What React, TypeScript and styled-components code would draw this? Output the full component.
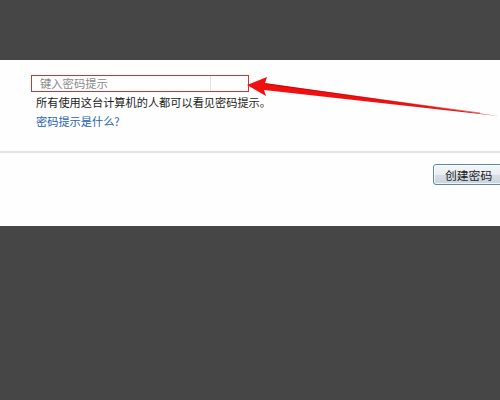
import React from 'react';
import styled, { createGlobalStyle } from 'styled-components';

const Global = createGlobalStyle`
  html, body {
    margin: 0;
    padding: 0;
    background: #464646;
    font-family: "Noto Sans CJK SC", "Noto Sans", sans-serif;
    overflow: hidden;
  }
`;

const Page = styled.div`
  position: relative;
  width: 500px;
  height: 400px;
  display: flex;
  flex-direction: column;
  overflow: hidden;
`;

const TopBand = styled.div`
  height: 60px;
  background: #464646;
`;

const Panel = styled.div`
  background: #fefefe;
  height: 166px;
  display: flex;
  flex-direction: column;
`;

const Form = styled.div`
  padding: 15px 0 0 31px;
  height: 76px;
  display: flex;
  flex-direction: column;
`;

const HintBox = styled.div`
  width: 216px;
  height: 15px;
  border: 1px solid #c9373c;
  display: flex;
  align-items: center;
`;

const HintText = styled.div`
  flex: 0 0 179px;
  height: 100%;
  border-right: 1px solid #e2e2e2;
  padding-left: 8px;
  box-sizing: border-box;
  font-size: 11.3px;
  line-height: 15px;
  color: #8a8a8a;
`;

const Line = styled.div<{ $link?: boolean }>`
  margin: ${p => (p.$link ? '4px 0 0 5px' : '3px 0 0 5px')};
  font-size: 11.2px;
  line-height: 15px;
  color: ${p => (p.$link ? '#2364b0' : '#1b1b1b')};
`;

const Divider = styled.div`
  height: 2px;
  background: #e4e4e4;
`;

const Actions = styled.div`
  display: flex;
  justify-content: flex-end;
  padding-top: 11px;
  margin-right: -25px;
`;

const Button = styled.div`
  width: 79px;
  height: 19px;
  border: 1px solid #5b87ab;
  border-radius: 3px;
  background: linear-gradient(#f5f7f9 0%, #e9edf1 50%, #d8dee4 51%, #ccd4dc 100%);
  box-shadow: inset 0 0 0 1px rgba(255, 255, 255, 0.7);
  font-size: 11.8px;
  line-height: 19px;
  color: #1b1b1b;
  padding-left: 11px;
  box-sizing: content-box;
`;

const BottomBand = styled.div`
  flex: 1;
  background: #464646;
`;

const Arrow = styled.svg`
  position: absolute;
  left: 0;
  top: 0;
  pointer-events: none;
`;

export default function App() {
  return (
    <Page>
      <Global />
      <TopBand />
      <Panel>
        <Form>
          <HintBox>
            <HintText>键入密码提示</HintText>
          </HintBox>
          <Line>所有使用这台计算机的人都可以看见密码提示。</Line>
          <Line $link>密码提示是什么?</Line>
        </Form>
        <Divider />
        <Actions>
          <Button>创建密码</Button>
        </Actions>
      </Panel>
      <BottomBand />
      <Arrow width="500" height="400" viewBox="0 0 500 400">
        <path
          d="M247 85 L267 77 L265 83 L498 116 L264 90 L266 96 Z"
          fill="#f01010"
        />
        <path d="M266 84 L480 113" stroke="#b00000" strokeWidth="1" opacity="0.5" />
      </Arrow>
    </Page>
  );
}
